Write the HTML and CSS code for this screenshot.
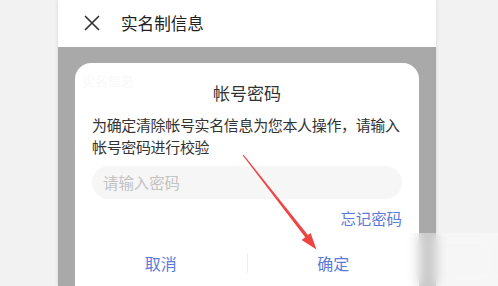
FILE: index.html
```html
<!DOCTYPE html>
<html lang="zh-CN">
<head>
<meta charset="utf-8">
<link rel="stylesheet" href="styles.css">
</head>
<body>
<div class="phone">
  <div class="header">
    <svg class="close" width="16" height="16" viewBox="0 0 16 16"><path d="M1.5 1.5 L14.5 14.5 M14.5 1.5 L1.5 14.5" stroke="#333" stroke-width="1.7" fill="none" stroke-linecap="round"/></svg>
    <span class="head-title">实名制信息</span>
  </div>
  <div class="overlay">
    <div class="dialog">
      <div class="ghost">实名信息</div>
      <div class="title">帐号密码</div>
      <div class="desc">为确定清除帐号实名信息为您本人操作，请输入<br>帐号密码进行校验</div>
      <div class="input">请输入密码</div>
      <div class="forgot">忘记密码</div>
      <div class="buttons">
        <div class="btn">取消</div>
        <div class="sep"></div>
        <div class="btn">确定</div>
      </div>
    </div>
  </div>
</div>
<svg class="arrow" width="498" height="286" viewBox="0 0 498 286">
  <polygon points="242.6,155.3 243.6,154.7 308.5,235.8 305.8,238" fill="#ee4444"/>
  <polygon points="316.5,249.5 310.6,233 301.6,240" fill="#ee4444"/>
</svg>
<div class="watermark"></div>
</body>
</html>
```
FILE: styles.css
```css
html, body {
  margin: 0;
  padding: 0;
}
body {
  width: 498px;
  height: 286px;
  overflow: hidden;
  background: #f2f2f2;
  font-family: "Noto Sans CJK SC", "Noto Sans", sans-serif;
  position: relative;
}
.phone {
  margin-left: 58px;
  width: 378px;
  height: 286px;
  display: flex;
  flex-direction: column;
  box-shadow: 0 0 4px rgba(0,0,0,0.12);
}
.header {
  height: 47px;
  background: #fff;
  display: flex;
  align-items: center;
  padding-left: 26px;
  flex-shrink: 0;
}
.close {
  display: block;
  margin-top: -1px;
}
.head-title {
  margin-left: 21px;
  font-size: 16.6px;
  color: #222;
  margin-top: -1px;
}
.overlay {
  flex: 1;
  background: #a9a9a9;
  padding: 16px 17px 0;
  overflow: hidden;
}
.dialog {
  background: #fff;
  border-radius: 16px;
  height: 226px;
  padding: 18px 17px 0;
  position: relative;
}
.ghost {
  position: absolute;
  left: 7px;
  top: 8px;
  font-size: 13px;
  color: #f9f9f9;
}
.title {
  text-align: center;
  font-size: 17px;
  line-height: 24px;
  color: #333;
}
.desc {
  margin-top: 9px;
  margin-right: -20px;
  white-space: nowrap;
  font-size: 15px;
  letter-spacing: -0.35px;
  line-height: 22px;
  color: #333;
}
.input {
  margin-top: 8px;
  height: 33px;
  border-radius: 17px;
  background: #f6f6f6;
  padding-left: 11px;
  font-size: 15.4px;
  line-height: 33px;
  color: #c2c2c2;
}
.forgot {
  margin-top: 8px;
  text-align: right;
  font-size: 15.4px;
  line-height: 22px;
  color: #5c7bd6;
}
.buttons {
  margin: 12px -17px 0;
  height: 44px;
  display: flex;
  align-items: center;
}
.btn {
  flex: 1;
  text-align: center;
  font-size: 16px;
  color: #5c7bd6;
}
.sep {
  width: 1px;
  height: 20px;
  background: #efefef;
}
.arrow {
  position: absolute;
  left: 0;
  top: 0;
}
.watermark {
  position: absolute;
  left: 355px;
  top: 233px;
  right: 0;
  bottom: 0;
  backdrop-filter: blur(6px);
  background: rgba(255,255,255,0.35);
}
```
